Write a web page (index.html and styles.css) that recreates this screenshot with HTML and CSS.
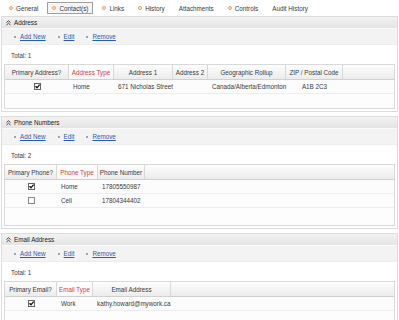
FILE: index.html
```html
<!DOCTYPE html>
<html lang="en">
<head>
    <meta charset="UTF-8">
    <title>Contacts</title>
    <link rel="stylesheet" href="styles.css">
</head>
<body>
    <!-- Tab strip -->
    <div class="tabs">
        <span class="tab"><span class="tab-icon"></span>General</span>
        <span class="tab tab-active"><span class="tab-icon"></span>Contact(s)</span>
        <span class="tab"><span class="tab-icon"></span>Links</span>
        <span class="tab"><span class="tab-icon"></span>History</span>
        <span class="tab">Attachments</span>
        <span class="tab"><span class="tab-icon"></span>Controls</span>
        <span class="tab">Audit History</span>
    </div>

    <!-- Address Section -->
    <div class="section">
        <div class="section-head">
            <svg class="collapse" width="5" height="6" viewBox="0 0 5 6"><path d="M0.5 2.5 L2.5 0.8 L4.5 2.5 M0.5 5 L2.5 3.3 L4.5 5" fill="none" stroke="#444" stroke-width="1"/></svg>
            Address
        </div>
        <div class="actions">
            <a class="action">Add New</a>
            <a class="action">Edit</a>
            <a class="action">Remove</a>
        </div>
        <div class="total">Total: 1</div>
        <div class="grid grid-address">
            <div class="grid-row grid-header">
                <span>Primary Address?</span>
                <span class="sorted">Address Type</span>
                <span>Address 1</span>
                <span>Address 2</span>
                <span>Geographic Rollup</span>
                <span>ZIP / Postal Code</span>
                <span class="fill"></span>
            </div>
            <div class="grid-row">
                <span class="center"><svg class="check" width="7" height="7" viewBox="0 0 7 7"><rect x="0.5" y="0.5" width="6" height="6" fill="#fff" stroke="#666"/><path d="M1.5 3.2 L3 4.8 L5.6 1.6" fill="none" stroke="#111" stroke-width="1.3"/></svg></span>
                <span>Home</span>
                <span>671 Nicholas Street</span>
                <span></span>
                <span>Canada/Alberta/Edmonton</span>
                <span class="center">A1B 2C3</span>
                <span></span>
            </div>
            <div class="grid-fill"></div>
        </div>
    </div>

    <!-- Phone Numbers Section -->
    <div class="section">
        <div class="section-head">
            <svg class="collapse" width="5" height="6" viewBox="0 0 5 6"><path d="M0.5 2.5 L2.5 0.8 L4.5 2.5 M0.5 5 L2.5 3.3 L4.5 5" fill="none" stroke="#444" stroke-width="1"/></svg>
            Phone Numbers
        </div>
        <div class="actions">
            <a class="action">Add New</a>
            <a class="action">Edit</a>
            <a class="action">Remove</a>
        </div>
        <div class="total">Total: 2</div>
        <div class="grid grid-phone">
            <div class="grid-row grid-header">
                <span>Primary Phone?</span>
                <span class="sorted">Phone Type</span>
                <span>Phone Number</span>
                <span class="fill"></span>
            </div>
            <div class="grid-row">
                <span class="center"><svg class="check" width="7" height="7" viewBox="0 0 7 7"><rect x="0.5" y="0.5" width="6" height="6" fill="#fff" stroke="#666"/><path d="M1.5 3.2 L3 4.8 L5.6 1.6" fill="none" stroke="#111" stroke-width="1.3"/></svg></span>
                <span>Home</span>
                <span>17805550987</span>
                <span></span>
            </div>
            <div class="grid-row">
                <span class="center"><svg class="check" width="7" height="7" viewBox="0 0 7 7"><rect x="0.5" y="0.5" width="6" height="6" fill="#fff" stroke="#888"/></svg></span>
                <span>Cell</span>
                <span>17804344402</span>
                <span></span>
            </div>
            <div class="grid-fill grid-fill-tall"></div>
        </div>
    </div>

    <!-- Email Address Section -->
    <div class="section">
        <div class="section-head">
            <svg class="collapse" width="5" height="6" viewBox="0 0 5 6"><path d="M0.5 2.5 L2.5 0.8 L4.5 2.5 M0.5 5 L2.5 3.3 L4.5 5" fill="none" stroke="#444" stroke-width="1"/></svg>
            Email Address
        </div>
        <div class="actions">
            <a class="action">Add New</a>
            <a class="action">Edit</a>
            <a class="action">Remove</a>
        </div>
        <div class="total">Total: 1</div>
        <div class="grid grid-email">
            <div class="grid-row grid-header">
                <span>Primary Email?</span>
                <span class="sorted">Email Type</span>
                <span>Email Address</span>
                <span class="fill"></span>
            </div>
            <div class="grid-row">
                <span class="center"><svg class="check" width="7" height="7" viewBox="0 0 7 7"><rect x="0.5" y="0.5" width="6" height="6" fill="#fff" stroke="#666"/><path d="M1.5 3.2 L3 4.8 L5.6 1.6" fill="none" stroke="#111" stroke-width="1.3"/></svg></span>
                <span>Work</span>
                <span>kathy.howard@mywork.ca</span>
                <span></span>
            </div>
            <div class="grid-fill"></div>
        </div>
    </div>
</body>
</html>
```

FILE: styles.css
```css
/* General Styling */
body {
    margin: 0;
    font-family: "Liberation Sans", Arial, sans-serif;
    font-size: 6.3px;
    color: #3a3a3a;
    background: #fff;
    overflow: hidden;
}

/* Tabs */
.tabs {
    height: 16px;
    display: flex;
    align-items: center;
    gap: 4px;
    padding-left: 4px;
}

.tab {
    display: flex;
    align-items: center;
    height: 10px;
    padding: 0 4px;
    border: 1px solid transparent;
}

.tab-active {
    border-color: #a0a0a0;
    background: #f5f5f5;
}

.tab-icon {
    width: 4px;
    height: 4px;
    margin-right: 3px;
    border-radius: 50%;
    box-sizing: border-box;
    border: 1px solid #f0a060;
    background: #fde6cc;
}

/* Sections */
.section {
    margin: 0 1px 4px;
    border: 1px solid #dcdcdc;
    padding-bottom: 2px;
}

.section-head {
    height: 11px;
    display: flex;
    align-items: center;
    gap: 3px;
    padding-left: 4px;
    background: linear-gradient(#f2f2f2, #e4e4e4);
    border-bottom: 1px solid #fafafa;
    color: #222;
}

.actions {
    height: 16px;
    display: flex;
    align-items: center;
    padding-left: 12px;
    background: #f3f3f3;
    border-bottom: 1px solid #ededed;
    box-sizing: border-box;
}

.action {
    display: flex;
    align-items: center;
    gap: 4px;
    margin-right: 12px;
    color: #2a5db0;
    text-decoration: underline;
    cursor: pointer;
}

.action::before {
    content: "";
    width: 2px;
    height: 2px;
    border-radius: 50%;
    background: #7088b8;
}

.total {
    height: 19px;
    display: flex;
    align-items: center;
    padding-left: 9px;
    padding-top: 1px;
    box-sizing: border-box;
}

/* Grids */
.grid {
    margin: 0 2px;
    border: 1px solid #d9d9d9;
}

.grid-row {
    display: grid;
    height: 14px;
    border-bottom: 1px solid #ededed;
    background: #fcfcfc;
    box-sizing: border-box;
}

.grid-address .grid-row { grid-template-columns: 64px 45px 59px 35px 78px 57px 1fr; }
.grid-phone .grid-row { grid-template-columns: 52px 41px 47px 1fr; }
.grid-email .grid-row { grid-template-columns: 52px 36px 78px 1fr; }

.grid-row span {
    display: flex;
    align-items: center;
    padding-left: 4px;
    white-space: nowrap;
}

.grid-row .center {
    justify-content: center;
    padding-left: 0;
}

.grid-header {
    height: 15px;
    background: linear-gradient(#fdfdfd, #ececec);
    border-bottom: 1px solid #d0d0d0;
}

.grid-header span {
    justify-content: center;
    padding-left: 0;
    overflow: hidden;
    border-right: 1px solid #d8d8d8;
}

.grid-header .sorted {
    color: #d0413f;
    background: linear-gradient(#ffffff, #f7f7f7);
}

.grid-header .fill {
    border-right: none;
}

.grid-fill {
    height: 14px;
    background: #fdfdfd;
}

.grid-fill-tall {
    height: 17px;
}

.check {
    display: block;
}
```
